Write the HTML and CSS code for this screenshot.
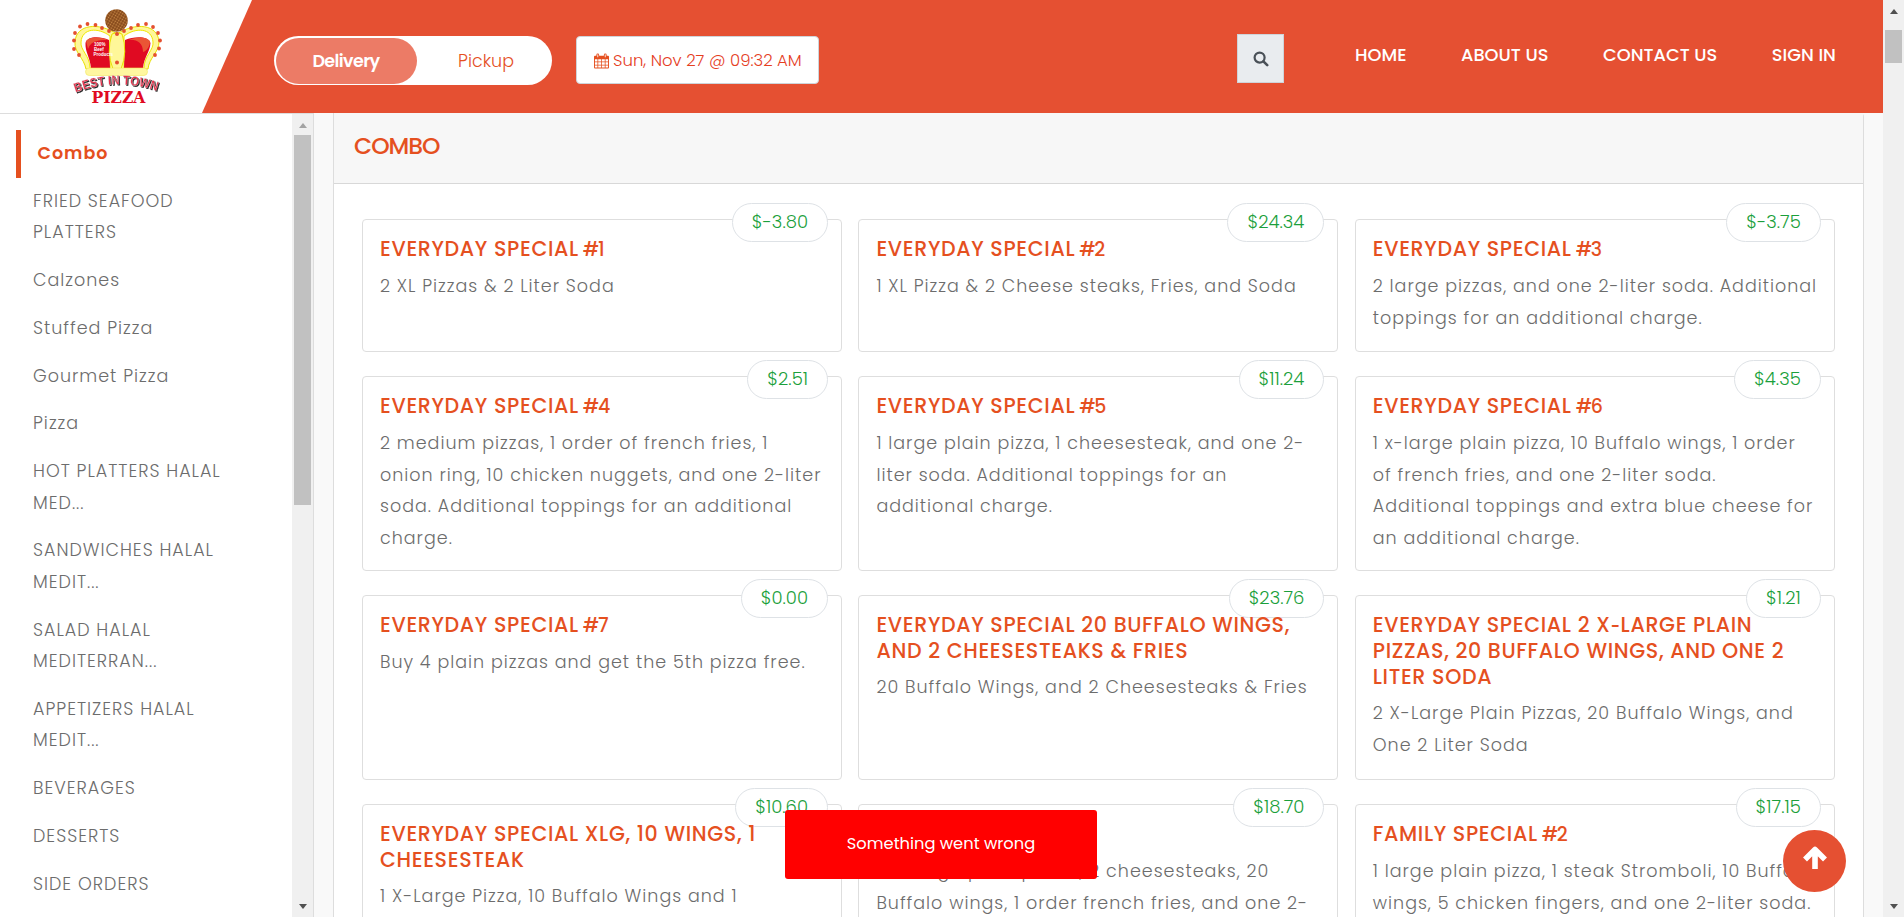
FILE: index.html
```html
<!DOCTYPE html>
<html lang="en">
<head>
<meta charset="utf-8">
<title>Best In Town Pizza</title>
<link rel="stylesheet" href="styles.css">
</head>
<body>
<div class="page">
  <div class="site">
    <header class="header">
      <div class="brand">
        <svg class="logo" viewBox="0 0 120 113" width="120" height="113">
          <defs>
            <pattern id="nut" width="2.6" height="2.6" patternUnits="userSpaceOnUse" patternTransform="rotate(30)"><rect width="2.6" height="2.6" fill="#85481a"/><circle cx="1.3" cy="1.3" r="0.8" fill="#c98a48"/></pattern>
            <path id="arch" d="M15.500 92.500 Q57 77 98.500 91.500"/>
          </defs>
          <path d="M26 69 C24 58 14 52 15 42 C16 24 39 22 57 34 C75 22 98 24 99 42 C99 52 89 58 88 69Z" fill="#fff799" stroke="#e8e000" stroke-width="1"/>
          <path d="M30 68 C30 56 20 50 21 42 C22 28 38 27 50 36 L50 68Z" fill="#fff" stroke="#f0e800"/>
          <path d="M84 68 C84 56 94 50 93 42 C92 28 76 27 64 36 L64 68Z" fill="#fff" stroke="#f0e800"/>
          <path d="M31 68 C30 57 25 52 25.500 43 C27 36 40 36 49 40 L50 68Z" fill="#e00a22"/>
          <path d="M83 68 C84 57 90 52 90.500 43 C88 36 75 36 65 40 L64 68Z" fill="#e00a22"/>
          <path d="M26 41 C30 36 42 37 48 40 C40 40 31 40 28 49Z" fill="#ea5535"/>
          <path d="M90 41 C86 36 76 37 68 40 C77 39 83 43 83 52 C87 51 90 46 90 41Z" fill="#ea5535"/>
          <path d="M52 34 Q57 31 62 34 Q68 52 61 69 H53 Q46 52 52 34Z" fill="#fff799" stroke="#e8e000"/>
          <rect x="25.500" y="68" width="62" height="7.500" rx="3.700" fill="#fff7a0" stroke="#f1e75c" stroke-width=".6"/>
          <g fill="#e4502f"><circle cx="14" cy="49" r="1.900"/><circle cx="14" cy="40.500" r="1.900"/><circle cx="15" cy="33" r="1.900"/><circle cx="20" cy="26.500" r="1.900"/><circle cx="27.500" cy="24" r="1.900"/><circle cx="35.500" cy="25" r="1.900"/><circle cx="42" cy="28" r="1.900"/><circle cx="49" cy="31" r="1.900"/><circle cx="57" cy="34" r="2"/><circle cx="64" cy="31" r="1.900"/><circle cx="71" cy="28" r="1.900"/><circle cx="78" cy="25" r="1.900"/><circle cx="86" cy="24" r="1.900"/><circle cx="93" cy="27" r="1.900"/><circle cx="98" cy="33" r="1.900"/><circle cx="100" cy="40.500" r="1.900"/><circle cx="99" cy="48.500" r="1.900"/><circle cx="95" cy="55" r="1.900"/><circle cx="19" cy="55" r="1.900"/><circle cx="57" cy="62.500" r="2"/></g>
          <circle cx="56.500" cy="20.500" r="11.300" fill="url(#nut)"/>
          <g class="logo-small"><text x="34" y="46">100%</text><text x="34" y="51">Beef</text><text x="33.500" y="56">Products</text></g>
          <text class="logo-arch"><textPath href="#arch" textLength="83" lengthAdjust="spacingAndGlyphs">BEST IN TOWN</textPath></text>
          <text class="logo-pizza" x="31.500" y="103" textLength="54" lengthAdjust="spacingAndGlyphs">PIZZA</text>
        </svg>
      </div>
      <div class="bar">
        <div class="toggle"><span class="toggle-on">Delivery</span><span class="toggle-off">Pickup</span></div>
        <div class="date">
          <svg class="cal" viewBox="0 0 16 16" width="15" height="16"><path fill="#e5501f" fill-rule="evenodd" d="M0 3.500a1 1 0 0 1 1-1h1.500V1.500a1.500 1.500 0 0 1 3 0v1h5v-1a1.500 1.500 0 0 1 3 0v1H15a1 1 0 0 1 1 1V15a1 1 0 0 1-1 1H1a1 1 0 0 1-1-1zM1 6v2.500h2.700V6zM4.500 6v2.500h3.100V6zM8.400 6v2.500h3.100V6zM12.300 6v2.500H15V6zM1 9.300v2.600h2.700V9.300zM4.500 9.300v2.600h3.100V9.300zM8.400 9.300v2.600h3.100V9.300zM12.300 9.300v2.600H15V9.300zM1 12.700V15h2.700v-2.300zM4.500 12.700V15h3.100v-2.300zM8.400 12.700V15h3.100v-2.300zM12.300 12.700V15H15v-2.300z"/><path d="M4 1v3M12 1v3" stroke="#fff" stroke-width=".9"/></svg>
          <span>Sun, Nov 27 @ 09:32 AM</span>
        </div>
        <div class="search"><svg viewBox="0 0 16 16" width="16" height="16"><circle cx="6.600" cy="6.600" r="5" fill="none" stroke="#495057" stroke-width="2.200"/><path d="M10.400 10.400 14.200 14.200" stroke="#495057" stroke-width="2.600" stroke-linecap="round"/></svg></div>
        <nav class="nav"><a>HOME</a><a>ABOUT US</a><a>CONTACT US</a><a>SIGN IN</a></nav>
      </div>
    </header>
    <div class="body">
      <aside class="side">
        <ul class="cats">
          <li class="active">Combo</li>
          <li>FRIED SEAFOOD<br>PLATTERS</li>
          <li>Calzones</li>
          <li>Stuffed Pizza</li>
          <li>Gourmet Pizza</li>
          <li>Pizza</li>
          <li>HOT PLATTERS HALAL<br>MED...</li>
          <li>SANDWICHES HALAL<br>MEDIT...</li>
          <li>SALAD HALAL<br>MEDITERRAN...</li>
          <li>APPETIZERS HALAL<br>MEDIT...</li>
          <li>BEVERAGES</li>
          <li>DESSERTS</li>
          <li>SIDE ORDERS</li>
        </ul>
        <div class="scroll side-scroll"><i class="up faint"></i><b></b><i class="down"></i></div>
      </aside>
      <main class="main">
        <section class="panel">
          <h2 class="panel-title">COMBO</h2>
          <div class="grid">
            <article class="card"><span class="price">$-3.80</span><h3>EVERYDAY SPECIAL <span class="num">#1</span></h3><p>2 XL Pizzas &amp; 2 Liter Soda</p></article>
            <article class="card"><span class="price">$24.34</span><h3>EVERYDAY SPECIAL <span class="num">#2</span></h3><p>1 XL Pizza &amp; 2 Cheese steaks, Fries, and Soda</p></article>
            <article class="card"><span class="price">$-3.75</span><h3>EVERYDAY SPECIAL <span class="num">#3</span></h3><p>2 large pizzas, and one 2-liter soda. Additional<br>toppings for an additional charge.</p></article>
            <article class="card"><span class="price">$2.51</span><h3>EVERYDAY SPECIAL <span class="num">#4</span></h3><p>2 medium pizzas, 1 order of french fries, 1<br>onion ring, 10 chicken nuggets, and one 2-liter<br>soda. Additional toppings for an additional<br>charge.</p></article>
            <article class="card"><span class="price">$11.24</span><h3>EVERYDAY SPECIAL <span class="num">#5</span></h3><p>1 large plain pizza, 1 cheesesteak, and one 2-<br>liter soda. Additional toppings for an<br>additional charge.</p></article>
            <article class="card"><span class="price">$4.35</span><h3>EVERYDAY SPECIAL <span class="num">#6</span></h3><p>1 x-large plain pizza, 10 Buffalo wings, 1 order<br>of french fries, and one 2-liter soda.<br>Additional toppings and extra blue cheese for<br>an additional charge.</p></article>
            <article class="card"><span class="price">$0.00</span><h3>EVERYDAY SPECIAL <span class="num">#7</span></h3><p>Buy 4 plain pizzas and get the 5th pizza free.</p></article>
            <article class="card"><span class="price">$23.76</span><h3>EVERYDAY SPECIAL 20 BUFFALO WINGS,<br>AND 2 CHEESESTEAKS &amp; FRIES</h3><p>20 Buffalo Wings, and 2 Cheesesteaks &amp; Fries</p></article>
            <article class="card"><span class="price">$1.21</span><h3>EVERYDAY SPECIAL 2 X<span class="hy">-</span>LARGE PLAIN<br>PIZZAS, 20 BUFFALO WINGS, AND ONE 2<br>LITER SODA</h3><p>2 X-Large Plain Pizzas, 20 Buffalo Wings, and<br>One 2 Liter Soda</p></article>
            <article class="card"><span class="price">$10.60</span><h3>EVERYDAY SPECIAL XLG, 10 WINGS, 1<br>CHEESESTEAK</h3><p>1 X-Large Pizza, 10 Buffalo Wings and 1</p></article>
            <article class="card"><span class="price">$18.70</span><h3>FAMILY SPECIAL <span class="num">#1</span></h3><p>2 x-large plain pizzas, 2 cheesesteaks, 20<br>Buffalo wings, 1 order french fries, and one 2-</p></article>
            <article class="card"><span class="price">$17.15</span><h3>FAMILY SPECIAL <span class="num">#2</span></h3><p>1 large plain pizza, 1 steak Stromboli, 10 Buffalo<br>wings, 5 chicken fingers, and one 2-liter soda.</p></article>
          </div>
        </section>
      </main>
    </div>
  </div>
  <div class="scroll page-scroll"><i class="up"></i><b></b><i class="down"></i></div>
  <div class="toast">Something went wrong</div>
  <div class="totop"><svg viewBox="0 0 26 25" width="26" height="25"><path d="M13 23V4M3 13.500 13 3.500l10 10" fill="none" stroke="#fff" stroke-width="5.600" stroke-linejoin="round"/></svg></div>
</div>
</body>
</html>
```
FILE: styles.css
```css
* { box-sizing: border-box; }
body { margin: 0; overflow: hidden; font-family: Poppins, Inter, "Open Sans", sans-serif; background: #f9f9f9; }
.page { position: relative; display: flex; width: 1904px; height: 917px; overflow: hidden; }
.site { width: 1883px; height: 917px; display: flex; flex-direction: column; }
.header { flex: none; height: 113px; display: flex; background: #fff; }
.brand { width: 202px; padding-left: 60px; }
.logo { display: block; }
.logo-small { font: bold 4.5px "Liberation Sans", sans-serif; fill: #fff; }
.logo-arch { font: bold 13px "Liberation Sans", sans-serif; fill: #e8304a; stroke: #ddd; stroke-width: .3px; filter: drop-shadow(1px 1px 0 #222); }
.logo-pizza { font: bold 16px "DejaVu Serif", serif; fill: #e00a22; }
.bar { flex: 1; display: flex; align-items: flex-start; padding: 36px 0 0 72px; background: #e55032; clip-path: polygon(50px 0, 100% 0, 100% 100%, 0 100%); }
.toggle { display: flex; width: 278px; height: 49px; padding: 2px 2px 1px 2px; border-radius: 25px; background: #fff; color: #e5501f; line-height: 46px; text-align: center; }
.toggle-on { width: 141px; border-radius: 23px; background: #ec7b66; color: #fff; font-weight: 600; font-size: 17.5px; letter-spacing: -.6px; padding-right: 1px; }
.toggle-off { flex: 1; padding-left: 5px; font-size: 17.5px; font-weight: 300; }
.date { display: flex; align-items: center; gap: 4px; width: 243px; height: 48px; margin-left: 24px; padding-left: 17px; border: 1px solid #ced4da; border-radius: 4px; background: #fff; color: #e5401f; font-size: 16.5px; font-weight: 300; white-space: nowrap; }
.cal { margin-top: 2px; }
.search { display: flex; align-items: center; justify-content: center; width: 47px; height: 49px; margin: -2px 0 0 418px; border: 1px solid #ced4da; background: #e9ecef; }
.nav { display: flex; margin: 4px 0 0 71px; gap: 54.5px; color: #fff; font-size: 17.8px; font-weight: 500; line-height: 30px; white-space: nowrap; }
.body { flex: 1; min-height: 0; display: flex; }
.side { flex: none; display: flex; width: 314px; border-top: 1px solid #ddd; border-right: 1px solid #ddd; background: #fff; }
.cats { flex: 1; margin: 0; padding: 16px 0 0 16px; list-style: none; color: #6c6c6c; font-size: 17.5px; line-height: 31.5px; letter-spacing: 1px; white-space: nowrap; font-weight: 300; }
.cats li { padding: 8.13px 0 8.13px 17px; }
.cats .active { padding-left: 16.5px; border-left: 5px solid #e5501f; color: #e5501f; font-weight: 600; }
.scroll { display: flex; flex-direction: column; align-items: center; width: 21px; background: #f0f0f0; }
.scroll b { width: 17px; background: #c1c1c1; }
.scroll i { border: 4.500px solid transparent; border-top: 0; border-bottom: 5px solid #505050; }
.scroll .down { border-bottom: 0; border-top: 5px solid #505050; margin-top: auto; margin-bottom: 8px; }
.scroll .faint { border-bottom-color: #a3a3a3; }
.side-scroll { padding-top: 9px; }
.side-scroll b { height: 370px; margin-top: 7px; }
.page-scroll { height: 917px; padding-top: 9px; }
.page-scroll b { height: 33px; margin-top: 16px; }
.main { flex: 1; padding: 0 19px; background: #f9f9f9; }
.panel { border: 1px solid #ddd; border-top: 0; border-top-right-radius: 4px; background: #fff; }
.panel-title { height: 71px; margin: 0; padding: 17px 20px 0; border-bottom: 1px solid #d8d8d8; background: #f7f7f7; color: #e5501f; font-size: 23.5px; line-height: 32px; font-weight: 500; letter-spacing: -1px; }
.grid { display: grid; grid-template-columns: repeat(3, 480px); grid-template-rows: 133px 195px 185px 220px; gap: 24px 16.4px; padding: 35px 28px 0; }
.card { position: relative; padding: 16px 17px 0; border: 1px solid #dedede; border-radius: 4px; background: #fff; white-space: nowrap; }
.card h3 { position: relative; margin: 0 0 8px; color: #e5501f; font-size: 20.600px; line-height: 26px; font-weight: 500; letter-spacing: .65px; }
.num { margin-left: -2px; letter-spacing: -1.5px; font-size: 19px; }
.hy { font-family: Inter, sans-serif; }
.card p { position: relative; margin: 0; color: #6c6c6c; font-size: 17.5px; line-height: 31.5px; letter-spacing: 1px; font-weight: 300; }
.price { position: absolute; top: -17px; right: 13px; height: 39px; padding: 0 19px; border: 1px solid #dee2e6; border-radius: 20px; background: #fff; color: #1b9f3b; font-size: 18px; font-weight: 300; line-height: 36px; }
.toast { position: absolute; left: 785px; top: 810px; width: 312px; height: 69px; border-radius: 3px; background: #f00; color: #fff; font-size: 16.3px; line-height: 68px; text-align: center; }
.totop { position: absolute; left: 1783px; top: 830px; width: 63px; height: 62px; border-radius: 50%; background: #e55032; display: flex; align-items: center; justify-content: center; padding-bottom: 6px; }
```
